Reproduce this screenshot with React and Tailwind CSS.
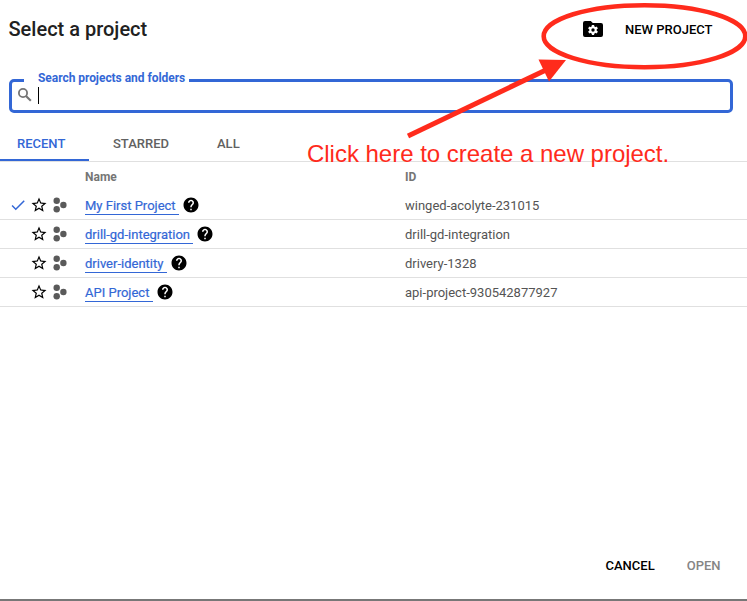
import React from "react";
import { MdCheck, MdHelp, MdStarBorder } from "react-icons/md";

const projects = [
  { name: "My First Project", id: "winged-acolyte-231015", selected: true, width: "w-[94px]" },
  { name: "drill-gd-integration", id: "drill-gd-integration", width: "w-[108px]" },
  { name: "driver-identity", id: "drivery-1328", width: "w-[82px]" },
  { name: "API Project", id: "api-project-930542877927", width: "w-[68px]" },
];

function FolderGearIcon() {
  return (
    <svg className="h-4 w-5" viewBox="0 0 20 16">
      <path
        fill="#000"
        fillRule="evenodd"
        d="M2 0h5.8l2 2H18a2 2 0 0 1 2 2v10a2 2 0 0 1-2 2H2a2 2 0 0 1-2-2V2a2 2 0 0 1 2-2z"
      />
      <g transform="translate(10 9)" fill="#fff">
        <circle r="3.7" />
        {[0, 60, 120].map((angle) => (
          <rect key={angle} x="-1.2" y="-5" width="2.4" height="10" rx="0.4" transform={`rotate(${angle})`} />
        ))}
        <circle r="1.7" fill="#000" />
      </g>
    </svg>
  );
}

function SearchIcon() {
  return (
    <svg className="size-[18px]" viewBox="0 0 18 18" fill="none" stroke="#757575" strokeWidth="1.8">
      <circle cx="7" cy="7" r="4.1" />
      <path d="M10 10L14.8 14.8" strokeWidth="2.1" />
    </svg>
  );
}

function ProjectIcon() {
  return (
    <svg className="h-4 w-3.5" viewBox="0 0 14 16" fill="#5a5a5a">
      <circle cx="3.7" cy="3.8" r="3.2" />
      <circle cx="3.7" cy="12.2" r="3.2" />
      <circle cx="10.4" cy="8" r="3.2" />
    </svg>
  );
}

function ProjectRow({ project }) {
  return (
    <div className="flex h-[29px] items-center border-b border-[#e0e0e0]">
      <div className="flex w-[85px] shrink-0 items-center pl-[9px]">
        <div className="w-[21px]">
          {project.selected && <MdCheck className="-mt-px size-[18px] text-[#3367d6]" />}
        </div>
        <MdStarBorder className="size-[18px] text-black" />
        <div className="ml-[5px]">
          <ProjectIcon />
        </div>
      </div>
      <div className="flex w-80 shrink-0 items-center">
        <a className={`${project.width} mt-px h-[19px] border-b border-[#3367d6] pt-px text-[13px] leading-[18px] whitespace-nowrap text-[#3367d6] [-webkit-text-stroke:0.2px_#3367d6]`}>
          {project.name}
        </a>
        <MdHelp className="ml-[3px] size-[18px] text-black" />
      </div>
      <div className="pt-0.5 text-[13px] text-[#545454]">{project.id}</div>
    </div>
  );
}

function Annotation() {
  return (
    <div className="pointer-events-none absolute inset-0">
      <svg className="absolute inset-0 h-[601px] w-[747px]" viewBox="0 0 747 601">
        <ellipse cx="644.5" cy="36.2" rx="100.8" ry="31" fill="none" stroke="#ff2b1c" strokeWidth="4.6" />
        <path d="M408 136L548 69" stroke="#ff2b1c" strokeWidth="5" />
        <path d="M538.5 59.5L566 60L549 81.5Z" fill="#ff2b1c" />
      </svg>
      <div className="absolute top-[140px] left-[307px] font-['Liberation_Sans',sans-serif] text-[24px] leading-7 tracking-[-0.02px] whitespace-nowrap text-[#ff2b1c]">
        Click here to create a new project.
      </div>
    </div>
  );
}

export default function App() {
  return (
    <div className="relative flex h-[601px] w-[747px] flex-col overflow-hidden bg-white font-[Roboto,sans-serif]">
      <header className="flex h-[59px] shrink-0 items-center justify-between pr-[34.5px] pl-[8.5px]">
        <h1 className="-mt-0.5 text-[20px] font-medium text-[#212121]">Select a project</h1>
        <button className="flex items-center gap-[22px] text-[13px] font-medium text-black">
          <span className="-mt-px">
            <FolderGearIcon />
          </span>
          NEW PROJECT
        </button>
      </header>

      <fieldset className="mr-3.5 ml-[9px] mt-[11px] h-[43px] shrink-0 rounded-[5px] border-[3px] border-[#3367d6] pl-1">
        <legend className="ml-2 h-[21px] w-[165px] pl-[14px] text-[12px] leading-[17px] font-bold tracking-[-0.04px] whitespace-nowrap text-[#3367d6]">
          Search projects and folders
        </legend>
        <div className="-mt-[5px] flex h-[18px] items-center">
          <SearchIcon />
          <span className="ml-1 h-[17px] w-px bg-black" />
        </div>
      </fieldset>

      <nav className="mt-3 flex h-[37px] shrink-0 border-b border-[#e0e0e0] text-[13px] font-medium text-[#616161]">
        <div className="h-9 w-[89px] border-b-2 border-[#3367d6] pl-[17px] leading-[37px] text-[#3367d6]">RECENT</div>
        <div className="w-32 pl-6 leading-[37px]">STARRED</div>
        <div className="leading-[37px]">ALL</div>
      </nav>

      <main className="grow">
        <div className="flex h-[29px] items-center pl-[85px] text-[12px] font-bold text-[#757575]">
          <div className="w-80">Name</div>
          <div>ID</div>
        </div>
        {projects.map((project) => (
          <ProjectRow key={project.id} project={project} />
        ))}
      </main>

      <footer className="flex h-[68px] shrink-0 items-start justify-end gap-8 border-b-2 border-[#777] pt-[23px] pr-[26.5px] text-[13px] leading-5 font-medium">
        <button className="text-black">CANCEL</button>
        <button className="text-[#858585]">OPEN</button>
      </footer>
      <Annotation />
    </div>
  );
}
